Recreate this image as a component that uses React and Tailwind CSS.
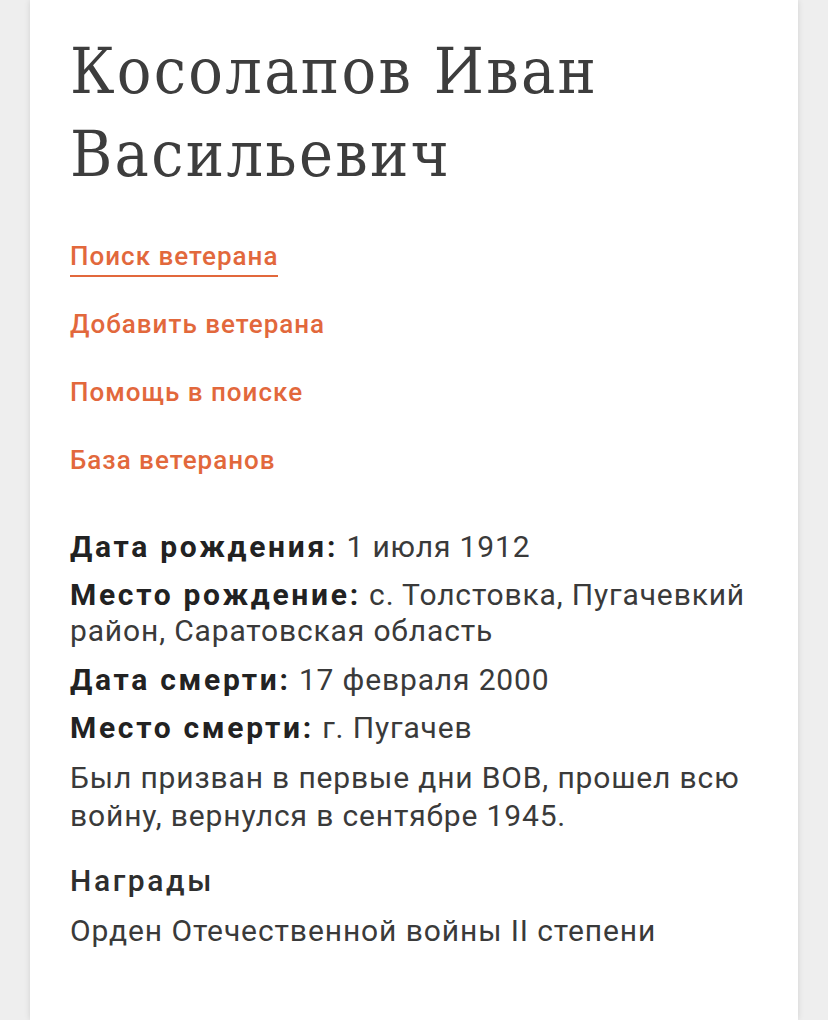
import React from "react";

const links = ["Поиск ветерана", "Добавить ветерана", "Помощь в поиске", "База ветеранов"];

function Row({ label, children }) {
  return (
    <p className="mb-[12px] text-[30px] leading-[36.4px] tracking-[0.85px] text-[#3a3a3a]">
      <span className="font-bold tracking-[2.7px] text-[#222]">{label}</span> {children}
    </p>
  );
}

export default function App() {
  return (
    <div className="min-h-[1020px] bg-[#eeeeee] flex justify-center" style={{ fontFamily: "Roboto, 'Noto Sans', sans-serif" }}>
      <div className="w-[768px] bg-white shadow-[0_0_6px_rgba(0,0,0,0.12)] px-[40px] pt-[30px] pb-[60px]">
        <h1
          className="text-[64px] leading-[83px] tracking-[2.3px] text-[#3d3d3d] font-normal"
          style={{ fontFamily: "'DejaVu Serif Condensed', 'DejaVu Serif', serif" }}
        >
          Косолапов Иван Васильевич
        </h1>
        <nav className="mt-[41px] flex flex-col items-start gap-[27.9px]">
          {links.map((l, i) => (
            <a
              key={l}
              href="#"
              className={
                "text-[26px] leading-[38px] tracking-[1px] font-medium text-[#e2683c] " +
                (i === 0 ? "border-b-2 border-[#e2683c]" : "border-b-2 border-transparent")
              }
            >
              {l}
            </a>
          ))}
        </nav>
        <div className="mt-[48px]">
          <Row label="Дата рождения:">1 июля 1912</Row>
          <Row label="Место рождение:">с. Толстовка, Пугачевкий район, Саратовская область</Row>
          <Row label="Дата смерти:">17 февраля 2000</Row>
          <Row label="Место смерти:">г. Пугачев</Row>
          <p className="text-[30px] leading-[38px] tracking-[0.85px] text-[#3a3a3a]">
            Был призван в первые дни ВОВ, прошел всю войну, вернулся в сентябре 1945.
          </p>
          <h2 className="mt-[26px] text-[30px] leading-[40px] tracking-[2.6px] font-medium text-[#2e2e2e]">Награды</h2>
          <p className="mt-[11px] text-[30px] leading-[38px] tracking-[0.9px] text-[#3a3a3a]">
            Орден Отечественной войны II степени
          </p>
        </div>
      </div>
    </div>
  );
}
